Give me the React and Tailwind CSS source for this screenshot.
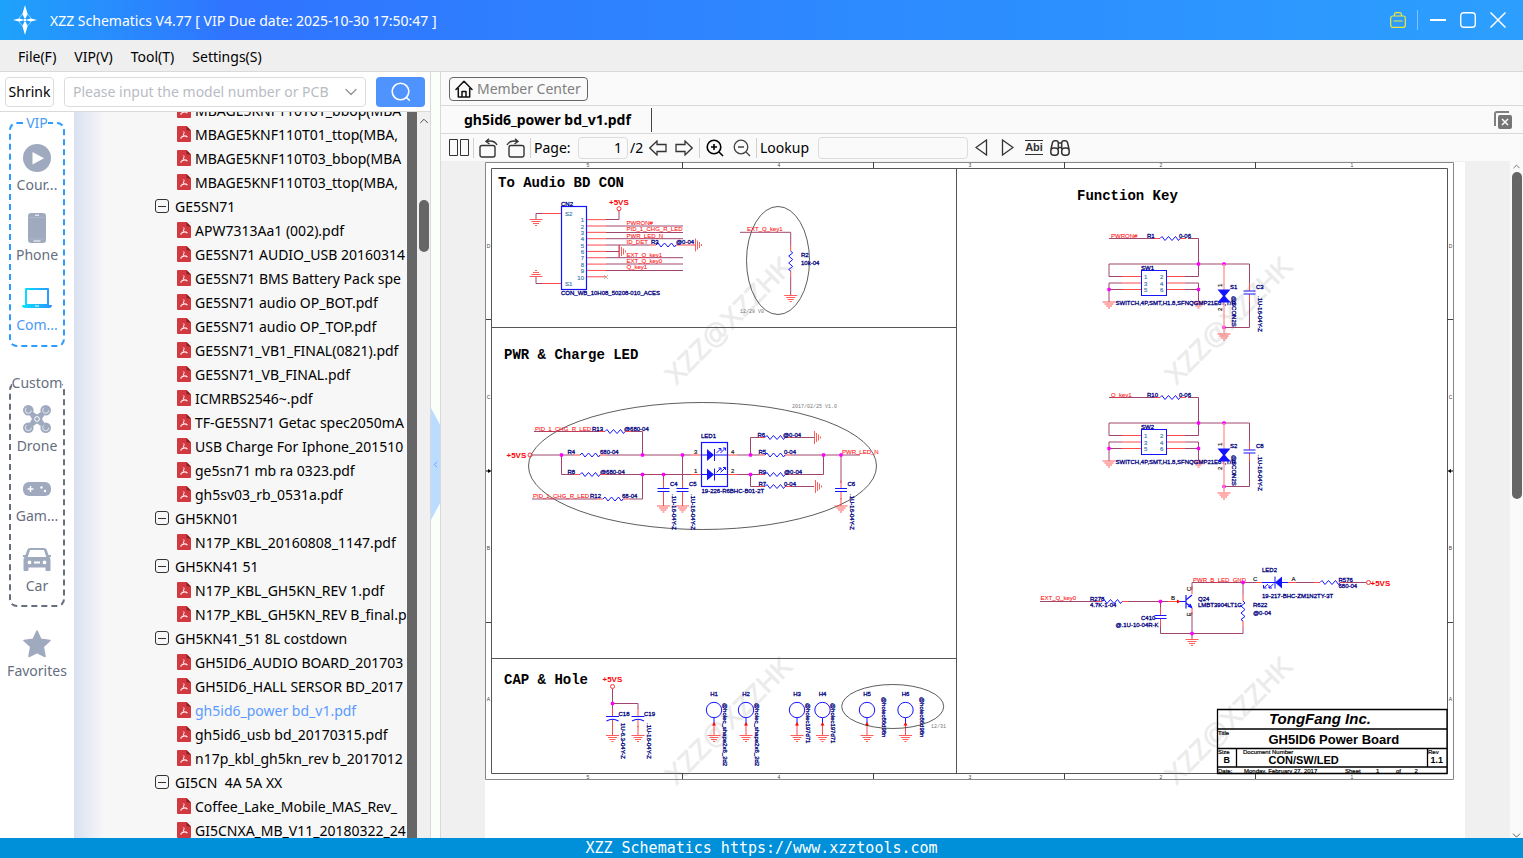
import React, { useState } from 'react';
import { ChevronDown, ChevronLeft, ChevronUp } from 'lucide-react';

const tree = [
  { name: 'MBAGE5KNF110T01_bbop(MBA' },
  { name: 'MBAGE5KNF110T01_ttop(MBA,' },
  { name: 'MBAGE5KNF110T03_bbop(MBA' },
  { name: 'MBAGE5KNF110T03_ttop(MBA,' },
  { name: 'GE5SN71', folder: true },
  { name: 'APW7313Aa1 (002).pdf' },
  { name: 'GE5SN71 AUDIO_USB 20160314' },
  { name: 'GE5SN71 BMS Battery Pack spe' },
  { name: 'GE5SN71 audio OP_BOT.pdf' },
  { name: 'GE5SN71 audio OP_TOP.pdf' },
  { name: 'GE5SN71_VB1_FINAL(0821).pdf' },
  { name: 'GE5SN71_VB_FINAL.pdf' },
  { name: 'ICMRBS2546~.pdf' },
  { name: 'TF-GE5SN71 Getac spec2050mA' },
  { name: 'USB Charge For Iphone_201510' },
  { name: 'ge5sn71 mb ra 0323.pdf' },
  { name: 'gh5sv03_rb_0531a.pdf' },
  { name: 'GH5KN01', folder: true },
  { name: 'N17P_KBL_20160808_1147.pdf' },
  { name: 'GH5KN41 51', folder: true },
  { name: 'N17P_KBL_GH5KN_REV 1.pdf' },
  { name: 'N17P_KBL_GH5KN_REV B_final.p' },
  { name: 'GH5KN41_51 8L costdown', folder: true },
  { name: 'GH5ID6_AUDIO BOARD_201703' },
  { name: 'GH5ID6_HALL SERSOR BD_2017' },
  { name: 'gh5id6_power bd_v1.pdf' },
  { name: 'gh5id6_usb bd_20170315.pdf' },
  { name: 'n17p_kbl_gh5kn_rev b_2017012' },
  { name: 'GI5CN  4A 5A XX', folder: true },
  { name: 'Coffee_Lake_Mobile_MAS_Rev_' },
  { name: 'GI5CNXA_MB_V11_20180322_24' },
];

/* ---------- icons ---------- */

const LogoIcon = () => (
  <svg viewBox="0 0 24 30" className="h-[30px] w-6" fill="#fff">
    <circle cx="12" cy="15" r="6" fill="none" stroke="#fff" strokeOpacity="0.5" />
    <path d="M12 0 L14.6 9 L12.7 13 H11.3 L9.4 9Z M12 30 L14.6 21 L12.7 17 H11.3 L9.4 21Z" />
    <path d="M0 15 L6 13.6 L10 14.6 V15.4 L6 16.4Z M24 15 L18 13.6 L14 14.6 V15.4 L18 16.4Z" />
    <circle cx="12" cy="15" r="1.6" />
  </svg>
);

const PdfIcon = () => (
  <svg viewBox="0 0 14 16" className="h-4 w-[14px] shrink-0">
    <path d="M1 0H9.5L14 4.5V15a1 1 0 0 1-1 1H1a1 1 0 0 1-1-1V1a1 1 0 0 1 1-1Z" fill="#d2383f" />
    <path d="M9.5 0L14 4.5H10.5a1 1 0 0 1-1-1Z" fill="#8e1c22" />
    <path d="M6.600 5.500C7.400 5.300 7 8 6.300 9.200C5.600 10.800 4.600 12.300 3.700 12.200C3.200 11.800 4.500 10.700 6 10.400C7.700 9.900 10 9.900 10.300 10.600C10.200 11.300 8.500 10.700 7.600 9.400" fill="none" stroke="#fff" strokeWidth="1" />
  </svg>
);

const CollapseIcon = () => (
  <svg viewBox="0 0 14 14" className="h-[14px] w-[14px] shrink-0" fill="none" stroke="#333">
    <rect x="0.500" y="0.500" width="13" height="13" rx="2.500" />
    <path d="M3 7.500H11" />
  </svg>
);

const CourseIcon = () => (
  <svg viewBox="0 0 28 28" className="h-7 w-7">
    <circle cx="14" cy="14" r="14" fill="#a0aabf" />
    <path d="M9.500 8v12.500L21 14.300Z" fill="#fff" />
  </svg>
);

const PhoneIcon = () => (
  <svg viewBox="0 0 18 30" className="h-[30px] w-[18px]">
    <rect width="18" height="30" rx="3" fill="#a0aabf" />
    <path d="M7 2.200h4M5.500 28h7" stroke="#fff" strokeWidth="1" />
    <path d="M1 4.500h16M1 26h16" stroke="#b9c1d1" strokeWidth="0.500" />
  </svg>
);

const LaptopIcon = () => (
  <svg viewBox="0 0 30 20" className="h-5 w-[30px]">
    <defs>
      <linearGradient id="laptop" x1="0" x2="1">
        <stop offset="0" stopColor="#08e4ff" />
        <stop offset="1" stopColor="#2a93ff" />
      </linearGradient>
    </defs>
    <path fillRule="evenodd" fill="url(#laptop)" d="M4 0H26a1 1 0 0 1 1 1V17H30a3 3 0 0 1-3 3H3a3 3 0 0 1-3-3H3V1a1 1 0 0 1 1-1ZM5 2V16H25V2ZM13 17.600V18.400H17V17.600Z" />
  </svg>
);

const DroneIcon = () => (
  <svg viewBox="0 0 28 28" className="h-7 w-7" fill="#a0aabf">
    <path d="M5 5L14 11L23 5L17.500 14L23 23L14 17L5 23L10.500 14Z" stroke="#a0aabf" strokeWidth="2.500" />
    <circle cx="5.300" cy="5.300" r="5.300" />
    <circle cx="22.700" cy="5.300" r="5.300" />
    <circle cx="5.300" cy="22.700" r="5.300" />
    <circle cx="22.700" cy="22.700" r="5.300" />
    <g fill="none" stroke="#fff" strokeWidth="0.700">
      <circle cx="5.300" cy="5.300" r="3" strokeDasharray="12 7" />
      <circle cx="22.700" cy="5.300" r="3" strokeDasharray="12 7" />
      <circle cx="5.300" cy="22.700" r="3" strokeDasharray="12 7" />
      <circle cx="22.700" cy="22.700" r="3" strokeDasharray="12 7" />
      <circle cx="14" cy="14" r="2.400" strokeWidth="1" />
    </g>
  </svg>
);

const GameIcon = () => (
  <svg viewBox="0 0 28 14" className="h-[14px] w-7">
    <rect width="28" height="14" rx="6" fill="#a0aabf" />
    <path d="M4.500 7h6M7.500 4v6" stroke="#fff" strokeWidth="1.400" />
    <circle cx="18.500" cy="5.500" r="1.200" fill="#fff" />
    <circle cx="22" cy="9" r="1.200" fill="#fff" />
  </svg>
);

const CarIcon = () => (
  <svg viewBox="0 0 28 23" className="h-[23px] w-7">
    <path fillRule="evenodd" fill="#a0aabf" d="M7 0H21a3 3 0 0 1 2.800 2L25.500 7H28V9H26.500A4 4 0 0 1 27.500 12V22a1 1 0 0 1-1 1H23.500a1 1 0 0 1-1-1V19.500H5.500V22a1 1 0 0 1-1 1H1.500a1 1 0 0 1-1-1V12A4 4 0 0 1 1.500 9H0V7H2.500L4.200 2A3 3 0 0 1 7 0ZM7 2L4.800 9H23.200L21 2ZM6.500 12.500A1.900 1.900 0 1 0 6.500 16.300A1.900 1.900 0 1 0 6.500 12.500ZM21.500 12.500A1.900 1.900 0 1 0 21.500 16.300A1.900 1.900 0 1 0 21.500 12.500ZM11 13.500V15.500H17V13.500Z" />
  </svg>
);

const StarIcon = () => (
  <svg viewBox="0 0 28 28" className="h-7 w-7">
    <path d="M14 1L17.800 9.400L27 10.500L20.200 16.700L22 26.500L14 22.500L6 26.500L7.800 16.700L1 10.500L10.200 9.400Z" fill="#a0aabf" stroke="#a0aabf" strokeWidth="1.600" strokeLinejoin="round" />
  </svg>
);

const ToolboxIcon = () => (
  <svg viewBox="0 0 16 16" className="h-4 w-4" fill="none" stroke="#ece83a" strokeWidth="1.200">
    <rect x="0.700" y="4" width="14.600" height="11.300" rx="2" />
    <path d="M4.500 4V2.500a2 2 0 0 1 2-1.800h3a2 2 0 0 1 2 1.800V4M3.500 9h9" />
  </svg>
);

const MinimizeIcon = () => (
  <svg viewBox="0 0 16 16" className="h-4 w-4" stroke="#fff" strokeWidth="2">
    <path d="M0 8H16" />
  </svg>
);

const MaximizeIcon = () => (
  <svg viewBox="0 0 16 16" className="h-4 w-4" fill="none" stroke="#fff" strokeWidth="1.400">
    <rect x="0.700" y="0.700" width="14.600" height="14.600" rx="3" />
  </svg>
);

const CloseIcon = () => (
  <svg viewBox="0 0 16 16" className="h-4 w-4" fill="none" stroke="#fff" strokeWidth="1.500">
    <path d="M0.500 0.500L15.500 15.500M15.500 0.500L0.500 15.500" />
  </svg>
);

const SearchIcon = () => (
  <svg viewBox="0 0 20 20" className="h-5 w-5" fill="none" stroke="#fff" strokeWidth="1.600" strokeLinecap="round">
    <circle cx="9.500" cy="9.500" r="8.300" />
    <path d="M15.500 15.500L18.300 18.300" />
  </svg>
);

const HomeIcon = () => (
  <svg viewBox="0 0 18 18" className="h-[18px] w-[18px]" fill="none" stroke="#111" strokeWidth="1.500" strokeLinejoin="round" strokeLinecap="round">
    <path d="M1 9.500L9 1.200L17 9.500M3.300 8V17H14.700V8M7 17V11.500H11V17" />
  </svg>
);

const PagesIcon = () => (
  <svg viewBox="0 0 20 18" className="h-[18px] w-5" fill="none" stroke="#333">
    <path d="M0.500 0.500H8.500V16.500H0.500ZM11.500 0.500H19.500V16.500H11.500Z" />
  </svg>
);

const RotateIcon = ({ flip }) => (
  <svg viewBox="0 0 20 20" className={flip ? 'h-5 w-5 -scale-x-100' : 'h-5 w-5'} fill="none" stroke="#333" strokeWidth="1.400">
    <rect x="1" y="7.500" width="15" height="11.500" rx="2" />
    <path d="M7.500 3.500C12 2.500 16 3.200 18 7M10 0.800L7 3.500L10.500 6" />
  </svg>
);

const BlockArrowIcon = ({ flip }) => (
  <svg viewBox="0 0 18 16" className={flip ? 'h-4 w-[18px] -scale-x-100' : 'h-4 w-[18px]'} fill="none" stroke="#333" strokeWidth="1.300">
    <path d="M0.800 8L8 1V4.500H17V11.500H8V15Z" />
  </svg>
);

const ZoomIcon = ({ plus }) => (
  <svg viewBox="0 0 18 18" className="h-[18px] w-[18px]" fill="none" stroke={plus ? '#000' : '#444'} strokeWidth={plus ? 1.6 : 1.3}>
    <circle cx="8" cy="8" r="6.800" />
    <path d={plus ? 'M5 8H11M8 5V11M13 13L17 17' : 'M5 8H11M13 13L17 17'} />
  </svg>
);

const TriangleIcon = ({ flip }) => (
  <svg viewBox="0 0 13 17" className={flip ? 'h-[17px] w-[13px] -scale-x-100' : 'h-[17px] w-[13px]'} fill="none" stroke="#333" strokeWidth="1.300">
    <path d="M1 8.500L11.500 1V16Z" />
  </svg>
);

const BinocularsIcon = () => (
  <svg viewBox="0 0 20 16" className="h-4 w-5" fill="none" stroke="#333" strokeWidth="1.500">
    <path d="M1 9L2.500 2.500Q3 0.800 5 0.800H6Q8.300 0.800 8.300 3V9M19 9L17.500 2.500Q17 0.800 15 0.800H14Q11.700 0.800 11.700 3V9M8.300 3H11.700M8.300 7.500H11.700" />
    <rect x="0.800" y="8" width="7.500" height="7.200" rx="3" />
    <rect x="11.700" y="8" width="7.500" height="7.200" rx="3" />
  </svg>
);

const CloseAllIcon = () => (
  <svg viewBox="0 0 18 18" className="h-[18px] w-[18px]">
    <path d="M1 15V3a2 2 0 0 1 2-2H15" fill="none" stroke="#808080" strokeWidth="2" />
    <rect x="4" y="4" width="14" height="14" rx="2" fill="#757575" />
    <path d="M8 8L14 14M14 8L8 14" stroke="#fff" strokeWidth="1.500" />
  </svg>
);

/* ---------- schematic parts ---------- */

const WIRE = '#a0466e';
const PIN = '#ff4a4a';
const BLUE = '#1414ff';
const NAVY = '#000080';

const Wire = ({ d }) => <path d={d} fill="none" stroke={WIRE} strokeWidth="1" />;
const Pin = ({ d }) => <path d={d} fill="none" stroke={PIN} strokeWidth="1" />;
const Ink = ({ d, w = 1 }) => <path d={d} fill="none" stroke={BLUE} strokeWidth={w} />;
const Dot = ({ x, y }) => <rect x={x - 1.7} y={y - 1.7} width="3.400" height="3.400" rx="1" fill="#ff00ff" />;

const Part = ({ x, y, children, down, anchor }) => (
  <text
    x={x}
    y={y}
    fontSize="6"
    fill={NAVY}
    stroke={NAVY}
    strokeWidth="0.3"
    textAnchor={anchor}
    transform={down ? `rotate(90 ${x} ${y})` : undefined}
  >
    {children}
  </text>
);
const Net = ({ x, y, children }) => (
  <text x={x} y={y} fontSize="6" fill="#ff2020" stroke="#ff2020" strokeWidth="0.100">{children}</text>
);
const PinNo = ({ x, y, children, up, anchor, fill = '#222' }) => (
  <text
    x={x}
    y={y}
    fontSize="6"
    fill={fill}
    stroke={fill}
    strokeWidth="0.200"
    textAnchor={anchor}
    transform={up ? `rotate(-90 ${x} ${y})` : undefined}
  >
    {children}
  </text>
);
const Power = ({ x, y }) => (
  <text x={x} y={y} fontSize="8" fontWeight="bold" fill="#ff0000">+5VS</text>
);
const Stamp = ({ x, y, children }) => (
  <text x={x} y={y} fontSize="5" fill="#777" fontFamily="Liberation Mono, monospace">{children}</text>
);
const Heading = ({ x, y, children }) => (
  <text x={x} y={y} fontSize="14" fontWeight="bold" fill="#000" fontFamily="Liberation Mono, monospace">{children}</text>
);

const Gnd = ({ x, y, turn = 0 }) => (
  <path
    transform={`translate(${x} ${y}) rotate(${turn})`}
    d="M-6.500 0H6.500M-4.500 2H4.500M-3 4H3M-1 6H1"
    stroke={PIN}
    strokeWidth="0.900"
  />
);
const Res = ({ x, y, turn = 0 }) => (
  <g transform={`translate(${x} ${y}) rotate(${turn})`}>
    <path d="M-6 0H0M20 0H26" stroke={PIN} />
    <path d="M0 0L2 -2L5 2L8.500 -2L12 2L15.500 -2L18.500 2L20 0" fill="none" stroke={BLUE} strokeWidth="1" />
  </g>
);
const Cap = ({ x, y, curved }) => (
  <g transform={`translate(${x} ${y})`}>
    <path d="M0 -8V0M0 3V11" stroke={PIN} />
    <path d={curved ? 'M-6.500 0H6.500M-6 4.500Q0 1 6 4.500' : 'M-6 0H6M-6 3H6'} fill="none" stroke={BLUE} strokeWidth="1.100" />
  </g>
);
const Diode = ({ x, y }) => (
  <g transform={`translate(${x} ${y})`}>
    <path d="M-6 0H0M7 -6V6" stroke={BLUE} />
    <path d="M-0.500 -6L6.500 0L-0.500 6Z" fill={BLUE} />
    <path d="M9 -2L13 -6M13 -2L18 -7M11 -6.500H13.500V-4M15.500 -7H18V-4.500" fill="none" stroke={BLUE} />
  </g>
);

const Hole = ({ x, name, note, nx, ny }) => (
  <g>
    <Part x={x} y={696} anchor="middle">{name}</Part>
    <circle cx={x} cy="710" r="7.700" fill="none" stroke={BLUE} />
    <Ink d={`M${x} 718V723`} />
    <Pin d={`M${x} 723V735`} />
    <path d={`M${x - 2} 725.500L${x} 722L${x + 2} 725.500Z`} fill="#ff0000" />
    <Gnd x={x} y={735.5} />
    <Part x={nx} y={ny} down>{note}</Part>
  </g>
);

const Switch = ({ dy, net, res, sw, dio, cap }) => (
  <g transform={`translate(0 ${dy})`}>
    <Wire d="M1109 238.500H1154M1188 238.500H1198.500V276.500H1185M1122 276.500H1109V264H1249.500V283M1122 283H1109V302M1122 289.500H1109M1185 283H1198.500V302M1185 289.500H1198.500M1249.500 302V327.500H1224" />
    <Res x={1160} y={238.5} />
    <Pin d="M1122 276.500H1141M1122 283H1141M1122 289.500H1141M1166 276.500H1185M1166 283H1185M1166 289.500H1185" />
    <Net x={1111} y={237.5}>{net}</Net>
    <Part x={1147} y={238}>{res}</Part>
    <Part x={1179} y={238}>0-06</Part>
    <rect x="1141.500" y="270.500" width="25" height="25" fill="none" stroke={BLUE} />
    <Part x={1141} y={270}>{sw}</Part>
    {[0, 1, 2].map((i) => (
      <g key={i}>
        <PinNo x={1144} y={279 + i * 6.5} fill="#4682b4">{i * 2 + 1}</PinNo>
        <PinNo x={1160} y={279 + i * 6.5} fill="#4682b4">{i * 2 + 2}</PinNo>
      </g>
    ))}
    <Dot x={1198.5} y={264} />
    <Dot x={1224} y={264} />
    <Dot x={1109} y={289.5} />
    <Dot x={1198.5} y={289.5} />
    <Dot x={1224} y={327.5} />
    <Gnd x={1109} y={302} />
    <Gnd x={1198.5} y={302} />
    <Gnd x={1224} y={334} />
    <Part x={1115.5} y={304.5}>SWITCH,4P,SMT,H1.8,SFNQGMP21E8T,T/R</Part>
    <path d="M1224 264V334" stroke="#ff9a9a" strokeWidth="1.400" />
    <path d="M1217.500 289.500H1230.500L1225 296L1230.500 302.500H1217.500L1223 296Z" fill={BLUE} />
    <PinNo x={1222} y={287} up>1</PinNo>
    <PinNo x={1222} y={311} up>2</PinNo>
    <Part x={1230} y={289}>{dio}</Part>
    <Part x={1232} y={296} down>@SCON2S</Part>
    <Cap x={1249.5} y={291} />
    <Part x={1256} y={289}>{cap}</Part>
    <Part x={1258} y={296} down>.1U-16-04Y-Z</Part>
  </g>
);

const Watermark = ({ x, y }) => (
  <text x={x} y={y} fontSize="27" fill="#ebebeb" stroke="#ebebeb" strokeWidth="0.500" textAnchor="middle" transform={`rotate(-45 ${x} ${y})`}>
    XZZ@XZZHK
  </text>
);

const AudioConnector = () => (
  <g>
    <Heading x={498} y={187}>To Audio BD CON</Heading>
    <rect x="561.500" y="206.500" width="25" height="83" fill="none" stroke={BLUE} strokeWidth="1.200" />
    <Part x={561} y={206}>CN2</Part>
    <PinNo x={565} y={216} fill="#4682b4">S2</PinNo>
    <PinNo x={565} y={286} fill="#4682b4">S1</PinNo>
    {[1, 2, 3, 4, 5, 6, 7, 8, 9, 10].map((n) => (
      <g key={n}>
        <PinNo x={584} y={216 + n * 6.35} anchor="end" fill="#4682b4">{n}</PinNo>
        <Pin d={`M587 ${213.3 + n * 6.35}H606`} />
      </g>
    ))}
    <Wire d="M606 219.500H619V211M606 226H683M606 232.500H683M606 238.700H683M606 245H650M606 251.500H619M606 257.700H683M606 264H683M606 270.500H683M619 245V257.700" />
    <Wire d="M542 213.500H536V219M542 283.500H536V277" />
    <Pin d="M542 213.500H561M542 283.500H561" />
    <Gnd x={536} y={219.5} />
    <Gnd x={536} y={276.5} turn={180} />
    <Gnd x={619.5} y={251.5} turn={-90} />
    <Gnd x={695.5} y={245} turn={-90} />
    <Res x={656} y={245} />
    <Pin d="M682 245H695" />
    <path d="M604 275L608 279M608 275L604 279" stroke="#b08080" strokeWidth="0.600" />
    <circle cx="619" cy="208.700" r="2" fill="none" stroke="#ff3030" />
    <Power x={609} y={204.5} />
    <Net x={626.5} y={224.5}>PWRON#</Net>
    <Net x={626.5} y={231}>PID_1_CHG_R_LED</Net>
    <Net x={626.5} y={237.5}>PWR_LED_N</Net>
    <Net x={626.5} y={243.7}>ID_DET</Net>
    <Net x={626.5} y={256.5}>EXT_Q_key1</Net>
    <Net x={626.5} y={263}>EXT_Q_key0</Net>
    <Net x={626.5} y={269}>Q_key1</Net>
    <Part x={651} y={244}>R3</Part>
    <Part x={676} y={244}>@0-04</Part>
    <Part x={561} y={295}>CON_WB_10H08_50208-010_ACES</Part>

    <ellipse cx="778" cy="260.500" rx="31.500" ry="54" fill="none" stroke="#333" strokeWidth="0.800" />
    <Net x={747} y={231}>EXT_Q_key1</Net>
    <Wire d="M740 232.300H790.700V245M790.700 277V295" />
    <Res x={790.7} y={251} turn={90} />
    <Gnd x={790.7} y={295.5} />
    <Part x={801} y={257}>R2</Part>
    <Part x={801} y={264.5}>10k-04</Part>
    <Stamp x={740} y={313}>12/28 V0</Stamp>
  </g>
);

const ChargeLed = () => (
  <g>
    <Heading x={504} y={359}>PWR &amp; Charge LED</Heading>
    <ellipse cx="702.500" cy="466" rx="174" ry="63.500" fill="none" stroke="#333" strokeWidth="0.800" />
    <Stamp x={792} y={408}>2017/02/25 V1.0</Stamp>
    <Wire d="M534 431.500H599M631 431.500H642.500V455M532 455H574M606 455H691M561.500 455V474.500H574M606 474.500H691M532 499H597M629 499H642.500V474.500M663.500 474.500V483M682.500 455V483" />
    <Net x={535} y={430.5}>PID_1_CHG_R_LED</Net>
    <Net x={533} y={498}>PID_1_CHG_R_LED</Net>
    <Part x={592} y={431}>R13</Part>
    <Part x={624} y={431}>@680-04</Part>
    <Part x={567.5} y={454}>R4</Part>
    <Part x={600} y={454}>680-04</Part>
    <Part x={567.5} y={473.5}>R8</Part>
    <Part x={600} y={473.5}>@680-04</Part>
    <Part x={590} y={498}>R12</Part>
    <Part x={622} y={498}>68-04</Part>
    <Res x={605} y={431.5} />
    <Res x={580} y={455} />
    <Res x={580} y={474.5} />
    <Res x={603} y={499} />
    <Power x={506.5} y={458} />
    <circle cx="530" cy="455" r="2" fill="none" stroke="#ff3030" />
    <Pin d="M691 455H701M691 474.500H701M727 455H737M727 474.500H737" />
    <PinNo x={694} y={454}>3</PinNo>
    <PinNo x={694} y={473}>1</PinNo>
    <PinNo x={731} y={454}>4</PinNo>
    <PinNo x={731} y={473}>2</PinNo>
    <rect x="701.500" y="442.500" width="26" height="44" fill="none" stroke={BLUE} strokeWidth="1.200" />
    <Part x={701} y={438}>LED1</Part>
    <Part x={701.5} y={492.5}>19-226-R6BHC-B01-2T</Part>
    <Diode x={707.5} y={455} />
    <Diode x={707.5} y={474.5} />
    <Ink d="M714 455H727M714 474.500H727" />

    <Wire d="M737 455H759M737 474.500H759M750.500 455V437.500H759M750.500 474.500V486.500H759M791 437.500H814M791 486.500H814M791 455H860M791 474.500H823.500V455M841 455V483" />
    <Res x={765} y={437.5} />
    <Res x={765} y={455} />
    <Res x={765} y={474.5} />
    <Res x={765} y={486.5} />
    <Gnd x={814.5} y={437.5} turn={-90} />
    <Gnd x={815.5} y={486.5} turn={-90} />
    <Part x={757.5} y={437}>R6</Part>
    <Part x={783} y={437}>@0-04</Part>
    <Part x={758.5} y={454}>R5</Part>
    <Part x={784} y={454}>0-04</Part>
    <Part x={758.5} y={473.5}>R9</Part>
    <Part x={784} y={473.5}>@0-04</Part>
    <Part x={758.5} y={485.5}>R7</Part>
    <Part x={784} y={485.5}>0-04</Part>
    <Net x={842} y={454}>PWR_LED_N</Net>
    {[[663.5, 'C4'], [682.5, 'C5'], [841, 'C6']].map(([x, name]) => (
      <g key={name}>
        <Cap x={x} y={488.5} />
        <Pin d={`M${x} 498V506`} />
        <Gnd x={x} y={506} />
        <Part x={x + 6.5} y={486}>{name}</Part>
        <Part x={x + 8.5} y={494} down>.1U-16-04Y-Z</Part>
      </g>
    ))}
    <Dot x={561.5} y={455} />
    <Dot x={642.5} y={455} />
    <Dot x={682.5} y={455} />
    <Dot x={642.5} y={474.5} />
    <Dot x={663.5} y={474.5} />
    <Dot x={750.5} y={455} />
    <Dot x={750.5} y={474.5} />
    <Dot x={823.5} y={455} />
    <Dot x={841} y={455} />
  </g>
);

const CapAndHole = () => (
  <g>
    <Heading x={504} y={684}>CAP &amp; Hole</Heading>
    <Power x={602.5} y={682} />
    <circle cx="612.500" cy="686.500" r="2" fill="none" stroke="#ff3030" />
    <Wire d="M612.500 689V709M612.500 703.500H638V709" />
    <Cap x={612.5} y={716.5} curved />
    <Cap x={638} y={716.5} curved />
    <Pin d="M612.500 726V735M638 726V735" />
    <Gnd x={612.5} y={735.5} />
    <Gnd x={638} y={735.5} />
    <Dot x={612.5} y={703.5} />
    <Part x={618.5} y={715.5}>C18</Part>
    <Part x={644} y={715.5}>C19</Part>
    <Part x={621} y={723} down>1U-6.3-04Y-Z</Part>
    <Part x={646.5} y={723} down>.1U-16-04Y-Z</Part>
    <Hole x={714} name="H1" note="@holec_shape2x6_2d2" nx={723} ny={703} />
    <Hole x={746} name="H2" note="@holec_shape2x6_2d2" nx={755} ny={703} />
    <Hole x={797} name="H3" note="@holec197d71" nx={805.5} ny={703} />
    <Hole x={822.5} name="H4" note="@holec197d71" nx={831} ny={703} />
    <Hole x={867} name="H5" note="@holec86d98n" nx={882} ny={697} />
    <Hole x={905.5} name="H6" note="@holec86d98n" nx={920} ny={697} />
    <ellipse cx="892.700" cy="706.500" rx="51" ry="22" fill="none" stroke="#333" strokeWidth="0.800" />
    <Stamp x={931} y={728}>12/31</Stamp>
  </g>
);

const LedDriver = () => (
  <g>
    <Wire d="M1040 601.500H1096M1128 601.500H1168M1160.500 601.500V610M1160.500 625V633.500H1243V627M1192 590V582.500H1256M1192 612V639M1243 582.500V595M1289 582.500H1314M1346 582.500H1366" />
    <Net x={1040.5} y={600}>EXT_Q_key0</Net>
    <Part x={1090} y={600.5}>R278</Part>
    <Part x={1090} y={607}>4.7K-1-04</Part>
    <Res x={1102} y={601.5} />
    <Pin d="M1168 601.500H1178M1192 586V594M1192 608V614M1256 582.500H1262M1288 582.500H1296" />
    <path d="M1177 599.500L1180.500 601.500L1177 603.500Z" fill="#ff0000" />
    <Ink d="M1180 601.500H1186M1186 595V608.500M1186 600L1192 595M1186 603L1192 607.500" w={1.2} />
    <path d="M1187.500 606.500L1192.500 608.500L1190.500 603.500Z" fill={BLUE} />
    <PinNo x={1171} y={600}>B</PinNo>
    <PinNo x={1191} y={591} up>C</PinNo>
    <PinNo x={1191} y={616.5} up>E</PinNo>
    <Part x={1198} y={601}>Q24</Part>
    <Part x={1198} y={607}>LMBT3904LT1G</Part>
    <Cap x={1160.5} y={615.5} />
    <Part x={1141} y={620}>C410</Part>
    <Part x={1115.5} y={626.5}>@.1U-10-04R-K</Part>
    <Res x={1243} y={601} turn={90} />
    <Part x={1253} y={607}>R622</Part>
    <Part x={1253} y={615}>@0-04</Part>
    <Gnd x={1192} y={639.5} />
    <Net x={1193} y={581.5}>PWR_B_LED_GND</Net>
    <PinNo x={1253} y={581}>C</PinNo>
    <PinNo x={1291.5} y={581}>A</PinNo>
    <Part x={1262} y={572}>LED2</Part>
    <Ink d="M1262 582.500H1288M1275 576.500V588.500" />
    <path d="M1282 576.500V588.500L1275 582.500Z" fill={BLUE} />
    <Ink d="M1268 584L1263.500 588M1273.500 584L1269 588M1263.500 585V588H1266.500M1269 585V588H1272" />
    <Part x={1262} y={598}>19-217-BHC-ZM1N2TY-3T</Part>
    <Res x={1320} y={582.5} />
    <Part x={1338.5} y={581.5}>R576</Part>
    <Part x={1338.5} y={588}>680-04</Part>
    <circle cx="1368.500" cy="582.500" r="2" fill="none" stroke="#ff3030" />
    <Power x={1370.5} y={585.5} />
    <Dot x={1160.5} y={601.5} />
    <Dot x={1192} y={633.5} />
    <Dot x={1243} y={582.5} />
  </g>
);

const TitleBlock = () => (
  <g fill="#000">
    <path d="M1217.500 709.500H1447V773.500H1217.500ZM1217.500 729H1447M1217.500 748.500H1447M1217.500 767H1447M1236.500 748.500V767M1427.500 748.500V767" fill="none" stroke="#000" strokeWidth="1.300" />
    <text x="1269" y="724" fontSize="15" fontWeight="bold" fontStyle="italic">TongFang Inc.</text>
    <text x="1268.500" y="743.500" fontSize="13" fontWeight="bold">GH5ID6 Power Board</text>
    <text x="1268.500" y="764" fontSize="11" fontWeight="bold">CON/SW/LED</text>
    <text x="1223.500" y="762.500" fontSize="9" fontWeight="bold">B</text>
    <text x="1430.500" y="762.500" fontSize="9" fontWeight="bold">1.1</text>
    <g fontSize="6" stroke="#000" strokeWidth="0.200">
      <text x="1218" y="735">Title</text>
      <text x="1218" y="754">Size</text>
      <text x="1243" y="754">Document Number</text>
      <text x="1428" y="754">Rev</text>
      <text x="1218" y="772.500">Date:</text>
      <text x="1244" y="772.500">Monday, February 27, 2017</text>
      <text x="1345" y="772.500">Sheet</text>
      <text x="1376" y="772.500">1</text>
      <text x="1396" y="772.500">of</text>
      <text x="1414.500" y="772.500">2</text>
    </g>
  </g>
);

const Schematic = () => (
  <svg viewBox="485 162 980 676" className="block h-[676px] w-[980px] font-['Liberation_Sans',sans-serif]">
    <Watermark x={735} y={327} />
    <Watermark x={1235} y={327} />
    <Watermark x={735} y={727} />
    <Watermark x={1235} y={727} />
    <path d="M485.500 162.500H1453.500V779.500H485.500Z" fill="none" stroke="#888" />
    <path d="M491.500 168.500H1447.500V773.500H491.500ZM956.500 168.500V773.500M491.500 327.500H956.500M491.500 658.500H956.500" fill="none" stroke="#555" />
    <path d="M682.500 162V168M873.500 162V168M1064.500 162V168M1255.500 162V168M682.500 773V779M873.500 773V779M1064.500 773V779M1255.500 773V779M486 319.500H491M486 622.500H491M1447 319.500H1453M1447 622.500H1453" stroke="#444" />
    <path d="M486 471H489M1450 471H1453" stroke="#000" />
    <path d="M488 469L491.500 471L488 473ZM1451 469L1447.500 471L1451 473Z" fill="#000" />
    <g fontSize="5" fill="#444" textAnchor="middle">
      {[5, 4, 3, 2, 1].map((n, i) => (
        <g key={n}>
          <text x={588 + i * 191} y="167">{n}</text>
          <text x={588 + i * 191} y="778.500">{n}</text>
        </g>
      ))}
      {['D', 'C', 'B', 'A'].map((c, i) => (
        <g key={c}>
          <text x="488.500" y={248 + i * 151}>{c}</text>
          <text x="1450.500" y={248 + i * 151}>{c}</text>
        </g>
      ))}
    </g>
    <AudioConnector />
    <ChargeLed />
    <CapAndHole />
    <Heading x={1077} y={200}>Function Key</Heading>
    <Switch dy={0} net="PWRON#" res="R1" sw="SW1" dio="S1" cap="C3" />
    <Switch dy={159} net="Q_key1" res="R10" sw="SW2" dio="S2" cap="C8" />
    <LedDriver />
    <TitleBlock />
  </svg>
);

/* ---------- application shell ---------- */

const TitleBar = () => (
  <header className="flex h-10 shrink-0 items-center bg-linear-to-r from-[#1ea2fb] via-[#3074ff] via-15% to-[#2c9ffe] pr-[17px] pl-[13px] text-white">
    <LogoIcon />
    <h1 className="ml-[13px] text-[14px]">XZZ Schematics V4.77 [ VIP Due date: 2025-10-30 17:50:47 ]</h1>
    <div className="ml-auto flex items-center">
      <button aria-label="Toolbox"><ToolboxIcon /></button>
      <span className="mr-3 ml-[11px] h-5 w-px bg-white/40" />
      <button aria-label="Minimize"><MinimizeIcon /></button>
      <button aria-label="Maximize" className="ml-[14px]"><MaximizeIcon /></button>
      <button aria-label="Close" className="ml-[14px]"><CloseIcon /></button>
    </div>
  </header>
);

const MenuBar = () => (
  <nav className="flex h-8 shrink-0 items-center gap-[18px] border-b border-[#d9d9d9] bg-[#efefef] px-[18px] pt-px text-[14px]">
    {['File(F)', 'VIP(V)', 'Tool(T)', 'Settings(S)'].map((m) => (
      <button key={m}>{m}</button>
    ))}
  </nav>
);

const NavItem = ({ icon, label, active }) => (
  <button className={active ? 'flex w-full flex-col items-center text-[#4a9bf5]' : 'flex w-full flex-col items-center text-[#666e80]'}>
    <span className="flex h-[30px] items-center">{icon}</span>
    <span className="leading-6">{label}</span>
  </button>
);

const Sidebar = () => (
  <aside className="w-[74px] shrink-0 bg-white px-[9px] text-[14px]">
    <fieldset className="h-[235px] rounded-[8px] border-2 border-dashed border-[#2f9bff]">
      <legend className="mx-auto leading-[22px] text-[#4a9bf5]">VIP</legend>
      <div className="mt-[9px] flex flex-col gap-4">
        <NavItem icon={<CourseIcon />} label="Cour..." />
        <NavItem icon={<PhoneIcon />} label="Phone" />
        <NavItem icon={<LaptopIcon />} label="Com..." active />
      </div>
    </fieldset>
    <fieldset className="mt-[25px] h-[235px] rounded-[8px] border-2 border-dashed border-[#666e80]">
      <legend className="mx-auto leading-[22px] text-[#666e80]">Custom</legend>
      <div className="mt-[10px] flex flex-col gap-4">
        <NavItem icon={<DroneIcon />} label="Drone" />
        <NavItem icon={<GameIcon />} label="Gam..." />
        <NavItem icon={<CarIcon />} label="Car" />
      </div>
    </fieldset>
    <div className="-mx-2 mt-[22px]">
      <NavItem icon={<StarIcon />} label="Favorites" />
    </div>
  </aside>
);

const FileTree = ({ selected, onSelect }) => (
  <div className="min-w-0 flex-1 overflow-hidden bg-[linear-gradient(to_right,#d9e0f0,#f7f7f7_30px)] pl-[81px]">
    <ul className="-mt-[14px] text-[14px]">
      {tree.map((node) => (
        <li key={node.name} className="h-6">
          <button
            onClick={() => onSelect(node.name)}
            className={
              node.folder
                ? 'flex h-6 items-center gap-[6px] whitespace-pre'
                : node.name === selected
                  ? 'flex h-6 items-center gap-1 pl-[22px] whitespace-pre text-[#5b9bff]'
                  : 'flex h-6 items-center gap-1 pl-[22px] whitespace-pre'
            }
          >
            {node.folder ? <CollapseIcon /> : <PdfIcon />}
            {node.name}
          </button>
        </li>
      ))}
    </ul>
  </div>
);

const LeftPanel = ({ selected, onSelect }) => (
  <section className="flex w-[431px] shrink-0 flex-col border-r border-[#d9d9d9] bg-white">
    <div className="flex h-10 shrink-0 items-center border-b border-[#d9d9d9] px-[5px] text-[14px]">
      <button className="h-[30px] w-[49px] rounded border border-[#dcdcdc] bg-white">Shrink</button>
      <div className="ml-[10px] flex h-[30px] w-[302px] items-center rounded border border-[#dcdcdc] pr-2 pl-2">
        <input
          aria-label="Search"
          placeholder="Please input the model number or PCB"
          className="min-w-0 flex-1 outline-none placeholder:text-[#b8bcc4]"
        />
        <ChevronDown size={20} strokeWidth={1.5} className="-mr-1 text-[#909399]" />
      </div>
      <button aria-label="Search" className="ml-[10px] flex h-[30px] w-[49px] items-center justify-center rounded bg-[#4f93ff]">
        <SearchIcon />
      </button>
    </div>
    <div className="flex min-h-0 flex-1">
      <Sidebar />
      <FileTree selected={selected} onSelect={onSelect} />
      <div className="w-[10px] shrink-0 bg-[#666]" />
      <div className="flex w-[13px] shrink-0 flex-col items-center bg-[#f0f0f0]">
        <ChevronUp size={14} strokeWidth={1.6} className="mt-[2px] text-[#444]" />
        <div className="mt-[72px] h-[52px] w-[10px] rounded-full bg-[#666]" />
      </div>
    </div>
  </section>
);

const Divider = () => <span className="h-5 w-px shrink-0 bg-[#d0d0d0]" />;

const Toolbar = () => (
  <div className="flex h-[27px] shrink-0 items-center pl-2 text-[14px]">
    <button aria-label="Page layout"><PagesIcon /></button>
    <span className="w-1" />
    <Divider />
    <button aria-label="Rotate left" className="ml-[5px]"><RotateIcon /></button>
    <button aria-label="Rotate right" className="ml-[6px]"><RotateIcon flip /></button>
    <span className="w-[5px]" />
    <Divider />
    <label htmlFor="page" className="ml-[3px] w-[44px]">Page:</label>
    <input id="page" defaultValue="1" className="h-[22px] w-[50px] rounded-sm border border-[#dcdcdc] pr-[5px] text-right outline-none" />
    <span className="ml-[2px] w-[15px]">/2</span>
    <button aria-label="Previous page" className="ml-1"><BlockArrowIcon /></button>
    <button aria-label="Next page" className="ml-2"><BlockArrowIcon flip /></button>
    <span className="w-[6px]" />
    <Divider />
    <button aria-label="Zoom in" className="ml-[6px]"><ZoomIcon plus /></button>
    <button aria-label="Zoom out" className="ml-[9px]"><ZoomIcon /></button>
    <span className="w-[5px]" />
    <Divider />
    <label htmlFor="lookup" className="ml-[3px] w-[58px]">Lookup</label>
    <input id="lookup" className="h-[22px] w-[150px] rounded-sm border border-[#dcdcdc] px-1 outline-none" />
    <button aria-label="Find previous" className="ml-[7px]"><TriangleIcon /></button>
    <button aria-label="Find next" className="ml-[13px]"><TriangleIcon flip /></button>
    <button className="ml-[11px] h-[15px] w-[18px] border-y border-[#333] font-['Liberation_Sans',sans-serif] text-[11px] leading-[13px] font-bold text-[#333]">Abi</button>
    <button aria-label="Find" className="ml-[7px]"><BinocularsIcon /></button>
  </div>
);

const Viewer = () => (
  <section className="flex min-w-0 flex-1 flex-col border-l border-[#d9d9d9] bg-[#fafafa]">
    <div className="flex h-[34px] shrink-0 items-center border-b border-[#d9d9d9] pl-2">
      <button className="flex h-6 w-[139px] items-center gap-1 rounded border border-[#666] pl-[5px] text-[14px] text-[#808080]">
        <HomeIcon />
        Member Center
      </button>
    </div>
    <div className="flex h-7 shrink-0 items-center border-b border-[#d9d9d9] pr-[11px]">
      <button className="h-6 border-r border-[#444] pr-5 pl-[23px] text-[14px] font-bold">gh5id6_power bd_v1.pdf</button>
      <button aria-label="Close all" className="ml-auto"><CloseAllIcon /></button>
    </div>
    <Toolbar />
    <div className="flex min-h-0 flex-1">
      <div className="min-w-0 flex-1 overflow-hidden bg-[#f0f0f0] pt-px pr-[2px]">
        <div className="mx-auto w-[980px] bg-white">
          <Schematic />
        </div>
      </div>
      <div className="flex w-[13px] shrink-0 flex-col items-center bg-[#fafafa]">
        <ChevronUp size={11} strokeWidth={1.6} className="text-[#444]" />
        <div className="h-[327px] w-[10px] shrink-0 rounded-full bg-[#666]" />
        <ChevronDown size={13} strokeWidth={1.6} className="mt-auto -mb-1 text-[#444]" />
      </div>
    </div>
  </section>
);

export default function App() {
  const [selected, setSelected] = useState('gh5id6_power bd_v1.pdf');

  return (
    <div className="flex h-screen flex-col overflow-hidden bg-white font-['Noto_Sans',sans-serif] text-black">
      <TitleBar />
      <MenuBar />
      <main className="flex min-h-0 flex-1">
        <LeftPanel selected={selected} onSelect={setSelected} />
        <div className="w-[9px] shrink-0 bg-[#fafffa]">
          <button
            aria-label="Collapse panel"
            className="mt-[336px] flex h-[112px] w-[9px] items-center justify-center bg-[#b9dcff] text-[#4f93ff] [clip-path:polygon(0_0,100%_15%,100%_85%,0_100%)]"
          >
            <ChevronLeft size={9} />
          </button>
        </div>
        <Viewer />
      </main>
      <footer className="flex h-5 shrink-0 items-center justify-center bg-[#0090d9] font-['DejaVu_Sans_Mono',monospace] text-[15px] text-white">
        XZZ Schematics https://www.xzztools.com
      </footer>
    </div>
  );
}
